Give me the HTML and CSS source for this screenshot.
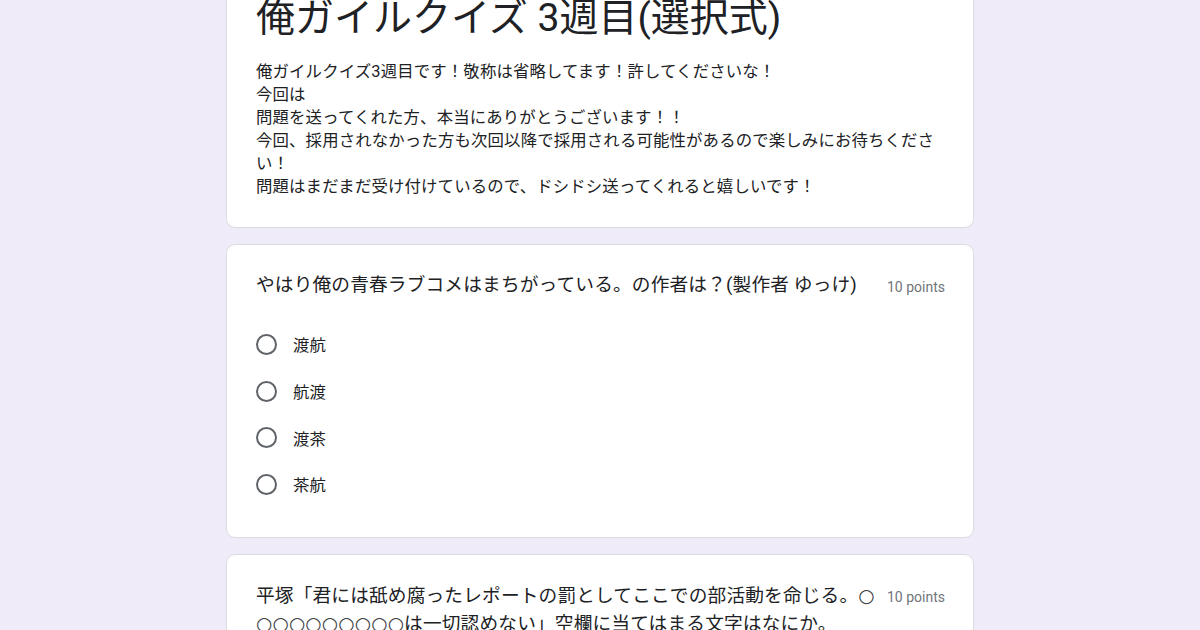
FILE: index.html
```html
<!doctype html>
<html lang="ja">
<head>
    <title>俺ガイルクイズ 3週目(選択式)</title>
    <meta charset="utf-8">
    <link rel="stylesheet" href="styles.css">
</head>
<body>
    <div id="form">
        <div class="card head-card">
            <div class="form-title">俺ガイルクイズ 3週目(選択式)</div>
            <div class="form-desc">
                俺ガイルクイズ3週目です！敬称は省略してます！許してくださいな！<br>
                今回は<br>
                問題を送ってくれた方、本当にありがとうございます！！<br>
                今回、採用されなかった方も次回以降で採用される可能性があるので楽しみにお待ちください！<br>
                問題はまだまだ受け付けているので、ドシドシ送ってくれると嬉しいです！
            </div>
        </div>

        <div class="card">
            <div class="q-head">
                <div class="q-text">やはり俺の青春ラブコメはまちがっている。の作者は？(製作者 ゆっけ)</div>
                <div class="q-points">10 points</div>
            </div>
            <div class="options">
                <label class="opt"><span class="radio"></span><span>渡航</span></label>
                <label class="opt"><span class="radio"></span><span>航渡</span></label>
                <label class="opt"><span class="radio"></span><span>渡茶</span></label>
                <label class="opt"><span class="radio"></span><span>茶航</span></label>
            </div>
        </div>

        <div class="card">
            <div class="q-head">
                <div class="q-text">平塚「君には舐め腐ったレポートの罰としてここでの部活動を命じる。<span class="blank">○○○○○○○○○○</span>は一切認めない」空欄に当てはまる文字はなにか。</div>
                <div class="q-points">10 points</div>
            </div>
        </div>
    </div>
</body>
</html>
```

FILE: styles.css
```css
body {
    margin: 0;
    background-color: #f0ebf8;
    font-family: Roboto, "Noto Sans CJK JP", sans-serif;
    color: #202124;
    overflow: hidden;
}

#form {
    width: 748px;
    margin: -29px auto 0;
    display: flex;
    flex-direction: column;
    gap: 16px;
}

.card {
    background-color: white;
    border: 1px solid #dadce0;
    border-radius: 9px;
    padding: 27px 28px 29px 29px;
}

.head-card {
    padding-top: 22px;
    padding-bottom: 29px;
}

.form-title {
    font-size: 39px;
    line-height: 48px;
}

.form-desc {
    margin-top: 18px;
    font-size: 16.4px;
    line-height: 23px;
    letter-spacing: 0.15px;
}

.q-head {
    display: flex;
    align-items: flex-start;
    gap: 6px;
}

.q-text {
    flex: 1;
    font-size: 18.7px;
    line-height: 27px;
    letter-spacing: 0.15px;
}

.blank {
    font-family: "DejaVu Sans", sans-serif;
    word-break: break-all;
    color: #3c4043;
}

.q-points {
    font-size: 14px;
    line-height: 27px;
    color: #70757a;
    white-space: nowrap;
    padding-top: 2px;
}

.options {
    margin-top: 20px;
    display: flex;
    flex-direction: column;
}

.opt {
    display: flex;
    align-items: center;
    gap: 16px;
    height: 46.7px;
    font-size: 16.4px;
}

.radio {
    width: 17px;
    height: 17px;
    border: 2px solid #5f6368;
    border-radius: 50%;
}
```
